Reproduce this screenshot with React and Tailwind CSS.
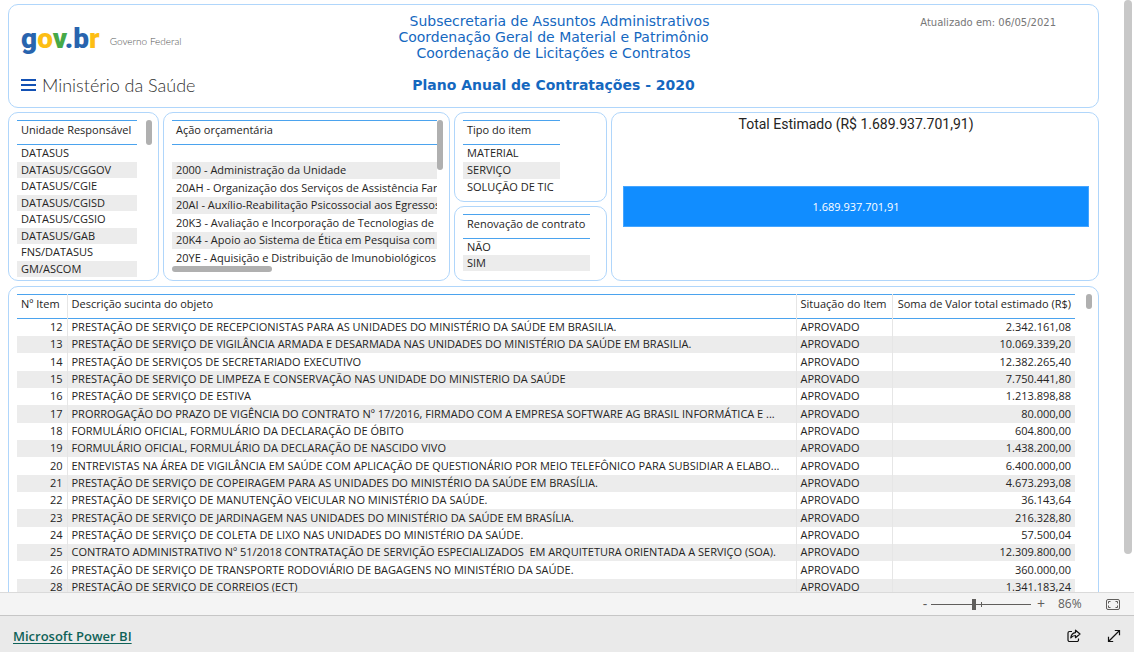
import React, { useState } from 'react';
import clsx from 'clsx';

const units = [
  'DATASUS',
  'DATASUS/CGGOV',
  'DATASUS/CGIE',
  'DATASUS/CGISD',
  'DATASUS/CGSIO',
  'DATASUS/GAB',
  'FNS/DATASUS',
  'GM/ASCOM',
];

const actions = [
  '',
  '2000 - Administração da Unidade',
  '20AH - Organização dos Serviços de Assistência Farm',
  '20AI - Auxílio-Reabilitação Psicossocial aos Egressos',
  '20K3 - Avaliação e Incorporação de Tecnologias de',
  '20K4 - Apoio ao Sistema de Ética em Pesquisa com',
  '20YE - Aquisição e Distribuição de Imunobiológicos',
];

const itemTypes = ['MATERIAL', 'SERVIÇO', 'SOLUÇÃO DE TIC'];
const renewals = ['NÃO', 'SIM'];

const items = [
  [12, 'PRESTAÇÃO DE SERVIÇO DE RECEPCIONISTAS PARA AS UNIDADES DO MINISTÉRIO DA SAÚDE EM BRASILIA.', '2.342.161,08'],
  [13, 'PRESTAÇÃO DE SERVIÇO DE VIGILÂNCIA ARMADA E DESARMADA NAS UNIDADES DO MINISTÉRIO DA SAÚDE EM BRASILIA.', '10.069.339,20'],
  [14, 'PRESTAÇÃO DE SERVIÇOS DE SECRETARIADO EXECUTIVO', '12.382.265,40'],
  [15, 'PRESTAÇÃO DE SERVIÇO DE LIMPEZA E CONSERVAÇÃO NAS UNIDADE DO MINISTERIO DA SAÚDE', '7.750.441,80'],
  [16, 'PRESTAÇÃO DE SERVIÇO DE ESTIVA', '1.213.898,88'],
  [17, 'PRORROGAÇÃO DO PRAZO DE VIGÊNCIA DO CONTRATO Nº 17/2016, FIRMADO COM A EMPRESA SOFTWARE AG BRASIL INFORMÁTICA E ...', '80.000,00'],
  [18, 'FORMULÁRIO OFICIAL, FORMULÁRIO DA DECLARAÇÃO DE ÓBITO', '604.800,00'],
  [19, 'FORMULÁRIO OFICIAL, FORMULÁRIO DA DECLARAÇÃO DE NASCIDO VIVO', '1.438.200,00'],
  [20, 'ENTREVISTAS NA ÁREA DE VIGILÂNCIA EM SAÚDE COM APLICAÇÃO DE QUESTIONÁRIO POR MEIO TELEFÔNICO PARA SUBSIDIAR A ELABO...', '6.400.000,00'],
  [21, 'PRESTAÇÃO DE SERVIÇO DE COPEIRAGEM PARA AS UNIDADES DO MINISTÉRIO DA SAÚDE EM BRASÍLIA.', '4.673.293,08'],
  [22, 'PRESTAÇÃO DE SERVIÇO DE MANUTENÇÃO VEICULAR NO MINISTÉRIO DA SAÚDE.', '36.143,64'],
  [23, 'PRESTAÇÃO DE SERVIÇO DE JARDINAGEM NAS UNIDADES DO MINISTÉRIO DA SAÚDE EM BRASÍLIA.', '216.328,80'],
  [24, 'PRESTAÇÃO DE SERVIÇO DE COLETA DE LIXO NAS UNIDADES DO MINISTÉRIO DA SAÚDE.', '57.500,04'],
  [25, 'CONTRATO ADMINISTRATIVO Nº 51/2018 CONTRATAÇÃO DE SERVIÇÃO ESPECIALIZADOS  EM ARQUITETURA ORIENTADA A SERVIÇO (SOA).', '12.309.800,00'],
  [26, 'PRESTAÇÃO DE SERVIÇO DE TRANSPORTE RODOVIÁRIO DE BAGAGENS NO MINISTÉRIO DA SAÚDE.', '360.000,00'],
  [28, 'PRESTAÇÃO DE SERVIÇO DE CORREIOS (ECT)', '1.341.183,24'],
];

const Card = ({ className, children }) => (
  <section
    className={clsx(
      'min-w-0 rounded-[10px] border border-[#b0d6fb] bg-white',
      className,
    )}
  >
    {children}
  </section>
);

const SlicerTable = ({ title, rows, rowClass, className }) => (
  <table className={clsx('border-collapse text-left', className)}>
    <thead>
      <tr className="h-6 border-y border-[#4ba3ee]">
        <th className="px-1 pb-[6px] font-normal">{title}</th>
      </tr>
    </thead>
    <tbody>
      {rows.map((row, index) => (
        <tr key={index} className={clsx(rowClass, 'even:bg-[#ececec]')}>
          <td className="overflow-hidden px-1 py-0">{row}</td>
        </tr>
      ))}
    </tbody>
  </table>
);

const Header = () => (
  <Card className="grid h-[104px] shrink-0 grid-cols-[1fr_auto_1fr] px-3">
    <div className="pt-4">
      <div className="flex items-center gap-[10px]">
        <div className="font-['Roboto',sans-serif] text-[28px] leading-9 font-black text-[#2864ae]">
          g<span className="text-[#fdbe14]">o</span>
          <span className="text-[#46a947]">v</span>.b
          <span className="text-[#fdbe14]">r</span>
        </div>
        <span className="pt-1 font-['Lato',sans-serif] text-[10px] font-light text-[#555]">
          Governo Federal
        </span>
      </div>
      <div className="mt-4 flex items-center gap-[6px]">
        <svg width="15" height="14" viewBox="0 0 15 14" fill="#1351b4">
          <rect y="1" width="15" height="2" />
          <rect y="6" width="15" height="2" />
          <rect y="11" width="15" height="2" />
        </svg>
        <span className="font-['Lato',sans-serif] text-[18px] leading-6 font-light text-[#333]">
          Ministério da Saúde
        </span>
      </div>
    </div>
    <div className="pt-2 text-center font-['DejaVu_Sans',sans-serif] text-[14px] leading-4 text-[#1568bf]">
      <p className="pl-3">Subsecretaria de Assuntos Administrativos</p>
      <p>Coordenação Geral de Material e Patrimônio</p>
      <p>Coordenação de Licitações e Contratos</p>
      <h1 className="mt-4 font-bold">Plano Anual de Contratações - 2020</h1>
    </div>
    <p className="pt-3 pr-[30px] text-right font-['DejaVu_Sans',sans-serif] text-[10px] leading-3 text-[#777]">
      Atualizado em: 06/05/2021
    </p>
  </Card>
);

const ItemsTable = () => (
  <table className="w-full table-fixed border-collapse whitespace-pre">
    <colgroup>
      <col className="w-[50px]" />
      <col />
      <col className="w-[96px]" />
      <col className="w-[183px]" />
    </colgroup>
    <thead>
      <tr className="h-6 border-y border-[#4ba3ee] text-left [&>th]:px-1 [&>th]:pb-[6px] [&>th]:font-normal [&>th:not(:last-child)]:border-r [&>th:not(:last-child)]:border-r-[#e6e6e6]">
        <th>Nº Item</th>
        <th>Descrição sucinta do objeto</th>
        <th>Situação do Item</th>
        <th className="text-right">Soma de Valor total estimado (R$)</th>
      </tr>
    </thead>
    <tbody>
      {items.map(([id, description, value]) => (
        <tr
          key={id}
          className="h-[17px] nth-[3n]:h-[18px] even:bg-[#ececec] [&>td]:px-1 [&>td]:py-0 [&>td:not(:last-child)]:border-r [&>td:not(:last-child)]:border-r-[#e6e6e6]"
        >
          <td className="text-right">{id}</td>
          <td className="overflow-hidden text-ellipsis">{description}</td>
          <td>APROVADO</td>
          <td className="text-right">{value}</td>
        </tr>
      ))}
    </tbody>
  </table>
);

const ZoomBar = () => {
  const [zoom, setZoom] = useState(86);

  return (
    <div className="flex h-6 shrink-0 items-center justify-end border-t border-b border-t-[#dadada] border-b-[#c6c6c6] bg-[#f4f4f4] pr-[14px] text-[#605e5c]">
      <button
        type="button"
        aria-label="Zoom out"
        className="w-3 text-[14px] leading-4"
        onClick={() => setZoom(Math.max(10, zoom - 10))}
      >
        -
      </button>
      <div className="relative flex h-4 w-[100px] items-center">
        <span className="absolute top-[6px] left-[50px] h-[5px] w-px bg-[#605e5c]" />
        <input
          type="range"
          aria-label="Zoom"
          min="0"
          max="200"
          value={zoom}
          onChange={(e) => setZoom(Number(e.target.value))}
          className="h-px w-full appearance-none bg-[#605e5c] [&::-webkit-slider-thumb]:h-[11px] [&::-webkit-slider-thumb]:w-1 [&::-webkit-slider-thumb]:appearance-none [&::-webkit-slider-thumb]:bg-[#605e5c]"
        />
      </div>
      <button
        type="button"
        aria-label="Zoom in"
        className="w-5 text-[14px] leading-4"
        onClick={() => setZoom(Math.min(200, zoom + 10))}
      >
        +
      </button>
      <span className="w-[55px] pl-[7px] text-[12px]">{zoom}%</span>
      <button type="button" aria-label="Fit to page">
        <svg width="14" height="11" viewBox="0 0 14 11" fill="none" stroke="#605e5c">
          <rect x="0.5" y="0.5" width="13" height="10" rx="1.5" />
          <path d="M2.500 4.500v-2h2M9.500 2.500h2v2M11.500 6.500v2h-2M4.500 8.500h-2v-2" />
        </svg>
      </button>
    </div>
  );
};

const Footer = () => (
  <footer className="flex h-9 shrink-0 items-center justify-between bg-[#eaeaea] px-[13px]">
    <a
      href="#"
      className="pt-1 text-[13px] font-semibold text-[#0f6258] underline underline-offset-2"
    >
      Microsoft Power BI
    </a>
    <div className="flex items-center gap-[26px] pt-[3px]">
      <button type="button" aria-label="Share">
        <svg width="14" height="14" viewBox="0 0 14 14" fill="none" stroke="#111" strokeWidth="1.200" strokeLinejoin="round">
          <path d="M5 2.500h-2.500a1.500 1.500 0 0 0-1.500 1.500v7a1.500 1.500 0 0 0 1.500 1.500h7.500a1.500 1.500 0 0 0 1.500-1.500v-1.500" />
          <path d="M8.500 1.200l4.500 3.800-4.500 3.700v-2.200c-2 0-3.400.7-4.700 2.400.3-3 1.900-5 4.700-5.300z" />
        </svg>
      </button>
      <button type="button" aria-label="Full screen">
        <svg width="14" height="14" viewBox="0 0 14 14" fill="none" stroke="#111" strokeWidth="1.200">
          <path d="M1.500 12.500l11-11M7.800 1.500h4.700v4.700M1.500 7.800v4.700h4.700" />
        </svg>
      </button>
    </div>
  </footer>
);

const App = () => {
  return (
    <div className="flex h-screen flex-col overflow-hidden bg-white font-['Open_Sans','Noto_Sans',sans-serif] text-[11px] leading-4 text-[#252423]">
      <main className="flex min-h-0 flex-1 overflow-hidden">
        <div className="flex min-w-0 flex-1 flex-col gap-[5px] pt-1 pl-2">
          <div className="flex shrink-0 flex-col gap-1">
            <Header />

            <div className="grid h-[169px] shrink-0 grid-cols-[151fr_287fr_153fr_488fr] gap-1">
              <Card className="flex items-start justify-between overflow-hidden px-2 pt-[7px]">
                <SlicerTable
                  title="Unidade Responsável"
                  rows={units}
                  rowClass="h-4 odd:h-[17px]"
                  className="w-[120px] whitespace-nowrap"
                />
                <span className="-mr-[2px] h-[25px] w-[6px] rounded-full bg-[#b0b0b0]" />
              </Card>

              <Card className="flex flex-col px-2 pt-[7px]">
                <div className="flex">
                  <div className="h-[146px] min-w-0 flex-1 overflow-hidden">
                    <SlicerTable
                      title="Ação orçamentária"
                      rows={actions}
                      rowClass="h-[17px] odd:not-first:h-[18px]"
                      className="w-full table-fixed whitespace-nowrap"
                    />
                  </div>
                  <span className="-mr-[2px] h-[50px] w-[6px] rounded-full bg-[#b0b0b0]" />
                </div>
                <span className="h-[6px] w-[100px] rounded-full bg-[#b0b0b0]" />
              </Card>

              <div className="flex flex-col gap-1">
                <Card className="h-[90px] px-2 pt-[7px]">
                  <SlicerTable
                    title="Tipo do item"
                    rows={itemTypes}
                    rowClass="h-[17px]"
                    className="w-[97px] whitespace-nowrap"
                  />
                </Card>
                <Card className="flex-1 px-2 pt-[7px]">
                  <SlicerTable
                    title="Renovação de contrato"
                    rows={renewals}
                    rowClass="h-4"
                    className="w-[127px] whitespace-nowrap"
                  />
                </Card>
              </div>

              <Card className="flex flex-col pt-[3px] pr-[9px] pl-[11px]">
                <h2 className="text-center font-['Roboto',sans-serif] text-[14px] leading-4">
                  Total Estimado (R$ 1.689.937.701,91)
                </h2>
                <div className="mt-[54px] flex h-[41px] items-center justify-center border border-[#45a5ff] bg-[#118dff] text-white">
                  1.689.937.701,91
                </div>
              </Card>
            </div>
          </div>

          <Card className="flex shrink-0 items-start gap-[11px] pt-[7px] pr-[6px] pb-4 pl-2">
            <div className="min-w-0 flex-1">
              <ItemsTable />
            </div>
            <span className="h-[15px] w-[6px] rounded-full bg-[#b0b0b0]" />
          </Card>
        </div>
        <div className="w-[35px] shrink-0 pr-[2px] pl-[25px]">
          <div className="h-[554px] rounded-full bg-[#c8c8c8]" />
        </div>
      </main>
      <ZoomBar />
      <Footer />
    </div>
  );
};

export default App;
